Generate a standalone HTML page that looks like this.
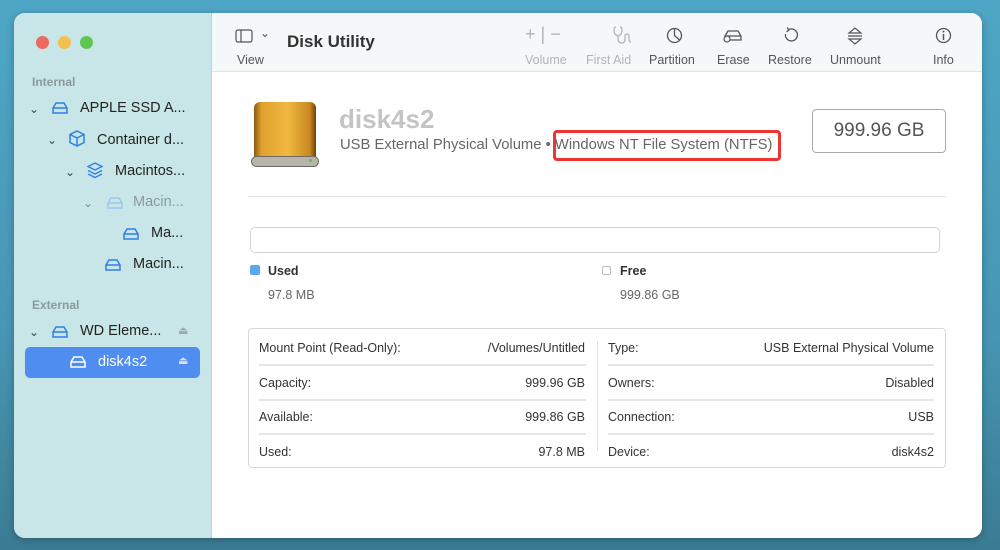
<!DOCTYPE html><html><head><meta charset="utf-8"><style>
*{box-sizing:border-box;margin:0;padding:0}
body{width:1000px;height:550px;overflow:hidden;background:linear-gradient(180deg,#4ea6c6 0%,#4796b3 60%,#3b7c93 100%);font-family:"Liberation Sans",sans-serif;position:relative}
.win{position:absolute;left:14px;top:13px;width:968px;height:525px;border-radius:11px;overflow:hidden;background:#fff;box-shadow:0 2px 8px rgba(0,0,0,.25)}
.side{position:absolute;left:0;top:0;width:198px;height:525px;background:#c8e6e7;border-right:1px solid #b8d4d6}
.dot{position:absolute;top:23px;width:13px;height:13px;border-radius:50%}
.t{position:absolute;font-size:14.5px;color:#222;white-space:nowrap}
.lbl{position:absolute;font-size:12px;color:#8a9a9c;font-weight:bold}
.chev{position:absolute;font-size:12px;color:#444}
.tb{position:absolute;left:198px;top:0;right:0;height:59px;background:#f4f8f9;border-bottom:1px solid #e0e4e5}
.tl{position:absolute;top:40px;font-size:12.5px;color:#555;text-align:center}
.g{color:#b0b4b5}
.m{position:absolute;font-size:12.5px;color:#333;white-space:nowrap}
.hr{position:absolute;height:2px;background:#e6e6e6}
</style></head><body>
<div class="win">
<div class="side">
<div class="dot" style="left:22px;background:#ec6a5e"></div>
<div class="dot" style="left:44px;background:#f4bf4f"></div>
<div class="dot" style="left:66px;background:#61c554"></div>
<div class="lbl" style="left:18px;top:62px">Internal</div>
<div class="chev" style="left:15px;top:89px">&#8964;</div>
<svg style="position:absolute;left:37px;top:88px" width="18" height="14" viewBox="0 0 18 14"><path d="M2 7 L5 2 H13 L16 7 V12 H2 Z M2 7 H16" fill="none" stroke="#2f7fe6" stroke-width="1.5"/></svg>
<div class="t" style="left:66px;top:87px">APPLE SSD A...</div>
<div class="chev" style="left:33px;top:120px">&#8964;</div>
<svg style="position:absolute;left:55px;top:117px" width="16" height="17" viewBox="0 0 16 17"><path d="M8 1 L15 4.5 V12.5 L8 16 L1 12.5 V4.5 Z M1 4.5 L8 8 L15 4.5 M8 8 V16" fill="none" stroke="#2f7fe6" stroke-width="1.5"/></svg>
<div class="t" style="left:83px;top:119px">Container d...</div>
<div class="chev" style="left:51px;top:152px">&#8964;</div>
<svg style="position:absolute;left:73px;top:149px" width="16" height="17" viewBox="0 0 16 17"><path d="M8 1 L15 4.5 L8 8 L1 4.5 Z M1 8.5 L8 12 L15 8.5 M1 12 L8 15.5 L15 12" fill="none" stroke="#2f7fe6" stroke-width="1.4"/></svg>
<div class="t" style="left:101px;top:150px">Macintos...</div>
<div class="chev" style="left:69px;top:183px;color:#888">&#8964;</div>
<svg style="position:absolute;left:92px;top:183px" width="18" height="14" viewBox="0 0 18 14"><path d="M2 7 L5 2 H13 L16 7 V12 H2 Z M2 7 H16" fill="none" stroke="#9cc7ef" stroke-width="1.5"/></svg>
<div class="t" style="left:119px;top:181px;color:#8a9a9c">Macin...</div>
<svg style="position:absolute;left:108px;top:214px" width="18" height="14" viewBox="0 0 18 14"><path d="M2 7 L5 2 H13 L16 7 V12 H2 Z M2 7 H16" fill="none" stroke="#2f7fe6" stroke-width="1.5"/></svg>
<div class="t" style="left:137px;top:212px">Ma...</div>
<svg style="position:absolute;left:90px;top:245px" width="18" height="14" viewBox="0 0 18 14"><path d="M2 7 L5 2 H13 L16 7 V12 H2 Z M2 7 H16" fill="none" stroke="#2f7fe6" stroke-width="1.5"/></svg>
<div class="t" style="left:119px;top:243px">Macin...</div>
<div class="lbl" style="left:18px;top:285px">External</div>
<div class="chev" style="left:15px;top:312px">&#8964;</div>
<svg style="position:absolute;left:37px;top:312px" width="18" height="14" viewBox="0 0 18 14"><path d="M2 7 L5 2 H13 L16 7 V12 H2 Z M2 7 H16" fill="none" stroke="#2f7fe6" stroke-width="1.5"/></svg>
<div class="t" style="left:66px;top:310px">WD Eleme...</div>
<div style="position:absolute;left:164px;top:311px;font-size:11px;color:#9aa">&#9167;</div>
<div style="position:absolute;left:11px;top:334px;width:175px;height:31px;background:#4f8ef0;border-radius:5px"></div>
<svg style="position:absolute;left:55px;top:342px" width="18" height="14" viewBox="0 0 18 14"><path d="M2 7 L5 2 H13 L16 7 V12 H2 Z M2 7 H16" fill="none" stroke="#fff" stroke-width="1.5"/></svg>
<div class="t" style="left:84px;top:341px;color:#fff">disk4s2</div>
<div style="position:absolute;left:164px;top:341px;font-size:11px;color:#dde">&#9167;</div>
</div>
<div class="tb">
<svg style="position:absolute;left:23px;top:16px" width="18" height="14" viewBox="0 0 18 14"><rect x="1" y="1" width="16" height="12" rx="2" fill="none" stroke="#555" stroke-width="1.2"/><path d="M6 1 V13" stroke="#555" stroke-width="1.2"/></svg>
<div style="position:absolute;left:48px;top:13px;font-size:12px;color:#555">&#8964;</div>
<div class="tl" style="left:25px">View</div>
<div style="position:absolute;left:75px;top:19px;font-size:17px;font-weight:bold;color:#333">Disk Utility</div>
<div style="position:absolute;left:313px;top:11px;font-size:18px;color:#b0b4b5">+ | −</div>
<div class="tl g" style="left:313px">Volume</div>
<svg style="position:absolute;left:401px;top:13px" width="20" height="18" viewBox="0 0 20 18"><path d="M3 1 Q1 1 1 4 Q1 9 5 10 Q9 9 9 4 Q9 1 7 1 M5 10 V13 Q5 17 9 17 Q12 17 12 13 V10 Q12 8 14 8 Q16 8 16 10 V13 Q16 16 18 16" fill="none" stroke="#b0b4b5" stroke-width="1.3"/></svg>
<div class="tl g" style="left:374px">First Aid</div>
<svg style="position:absolute;left:454px;top:14px" width="17" height="17" viewBox="0 0 17 17"><circle cx="8.5" cy="8.5" r="7" fill="none" stroke="#555" stroke-width="1.3"/><path d="M8.5 1.5 V8.5 L13.5 13" fill="none" stroke="#555" stroke-width="1.3"/></svg>
<div class="tl" style="left:437px">Partition</div>
<svg style="position:absolute;left:511px;top:15px" width="20" height="15" viewBox="0 0 20 15"><path d="M2 8 L5 3 H15 L18 8 V12 H2 Z M2 8 H18" fill="none" stroke="#555" stroke-width="1.3"/><circle cx="4" cy="11" r="3" fill="#f4f8f9" stroke="#555" stroke-width="1.2"/></svg>
<div class="tl" style="left:505px">Erase</div>
<svg style="position:absolute;left:571px;top:14px" width="16" height="17" viewBox="0 0 16 17"><path d="M5 3 A6 6 0 1 1 2.5 7" fill="none" stroke="#555" stroke-width="1.3"/><path d="M4 0.5 L6 3 L3.5 5" fill="none" stroke="#555" stroke-width="1.3"/></svg>
<div class="tl" style="left:556px">Restore</div>
<svg style="position:absolute;left:635px;top:14px" width="16" height="18" viewBox="0 0 16 18"><path d="M2 6 L8 1 L14 6 Z M2 12 L8 17 L14 12 Z M1 9 H15" fill="none" stroke="#555" stroke-width="1.2"/></svg>
<div class="tl" style="left:618px">Unmount</div>
<svg style="position:absolute;left:723px;top:14px" width="17" height="17" viewBox="0 0 17 17"><circle cx="8.5" cy="8.5" r="7" fill="none" stroke="#555" stroke-width="1.3"/><path d="M8.5 7 V13" stroke="#555" stroke-width="1.5"/><circle cx="8.5" cy="4.6" r="1" fill="#555"/></svg>
<div class="tl" style="left:721px">Info</div>
</div>
<div style="position:absolute;left:240px;top:89px;width:62px;height:64px;border-radius:6px;background:linear-gradient(90deg,#8a5a10 0%,#e0a030 12%,#f0b840 55%,#c88820 90%,#6a4208 100%)"></div>
<div style="position:absolute;left:237px;top:143px;width:68px;height:11px;border-radius:6px;background:#b8b4ac;border:1px solid #6e6a60"></div>
<div style="position:absolute;left:295px;top:146px;width:3px;height:3px;background:#4c4;border-radius:50%"></div>
<div style="position:absolute;left:325px;top:91px;font-size:26px;font-weight:bold;color:#c4c4c4">disk4s2</div>
<div style="position:absolute;left:326px;top:124px;font-size:14.8px;color:#666;white-space:nowrap">USB External Physical Volume •&nbsp;Windows NT File System (NTFS)</div>
<div style="position:absolute;left:539px;top:117px;width:228px;height:31px;border:3px solid #ee3333;border-radius:4px"></div>
<div style="position:absolute;left:798px;top:96px;width:134px;height:44px;border:1px solid #aaa;border-radius:4px;font-size:19px;color:#555;text-align:center;line-height:42px">999.96 GB</div>
<div style="position:absolute;left:235px;top:183px;width:697px;height:1px;background:#e2e2e2"></div>
<div style="position:absolute;left:236px;top:214px;width:690px;height:26px;border:1px solid #d4d4d4;border-radius:5px"></div>
<div style="position:absolute;left:236px;top:252px;width:10px;height:10px;background:#5aa8f0;border-radius:2px"></div>
<div style="position:absolute;left:254px;top:251px;font-size:12.5px;font-weight:bold;color:#333">Used</div>
<div style="position:absolute;left:254px;top:275px;font-size:12.5px;color:#666">97.8 MB</div>
<div style="position:absolute;left:588px;top:253px;width:9px;height:9px;border:1px solid #bbb;border-radius:2px"></div>
<div style="position:absolute;left:606px;top:251px;font-size:12.5px;font-weight:bold;color:#333">Free</div>
<div style="position:absolute;left:606px;top:275px;font-size:12.5px;color:#666">999.86 GB</div>
<div style="position:absolute;left:234px;top:315px;width:698px;height:140px;border:1px solid #d8d8d8;border-radius:4px"></div>
<div style="position:absolute;left:583px;top:328px;width:1px;height:110px;background:#e2e2e2"></div>
<div class="m" style="left:245px;top:328px">Mount Point (Read-Only):</div><div class="m" style="right:397px;top:328px">/Volumes/Untitled</div>
<div class="m" style="left:245px;top:363px">Capacity:</div><div class="m" style="right:397px;top:363px">999.96 GB</div>
<div class="m" style="left:245px;top:397px">Available:</div><div class="m" style="right:397px;top:397px">999.86 GB</div>
<div class="m" style="left:245px;top:432px">Used:</div><div class="m" style="right:397px;top:432px">97.8 MB</div>
<div class="m" style="left:594px;top:328px">Type:</div><div class="m" style="right:48px;top:328px">USB External Physical Volume</div>
<div class="m" style="left:594px;top:363px">Owners:</div><div class="m" style="right:48px;top:363px">Disabled</div>
<div class="m" style="left:594px;top:397px">Connection:</div><div class="m" style="right:48px;top:397px">USB</div>
<div class="m" style="left:594px;top:432px">Device:</div><div class="m" style="right:48px;top:432px">disk4s2</div>
<div class="hr" style="left:245px;top:351px;width:327px"></div>
<div class="hr" style="left:245px;top:386px;width:327px"></div>
<div class="hr" style="left:245px;top:420px;width:327px"></div>
<div class="hr" style="left:594px;top:351px;width:326px"></div>
<div class="hr" style="left:594px;top:386px;width:326px"></div>
<div class="hr" style="left:594px;top:420px;width:326px"></div>
</div>
</body></html>
